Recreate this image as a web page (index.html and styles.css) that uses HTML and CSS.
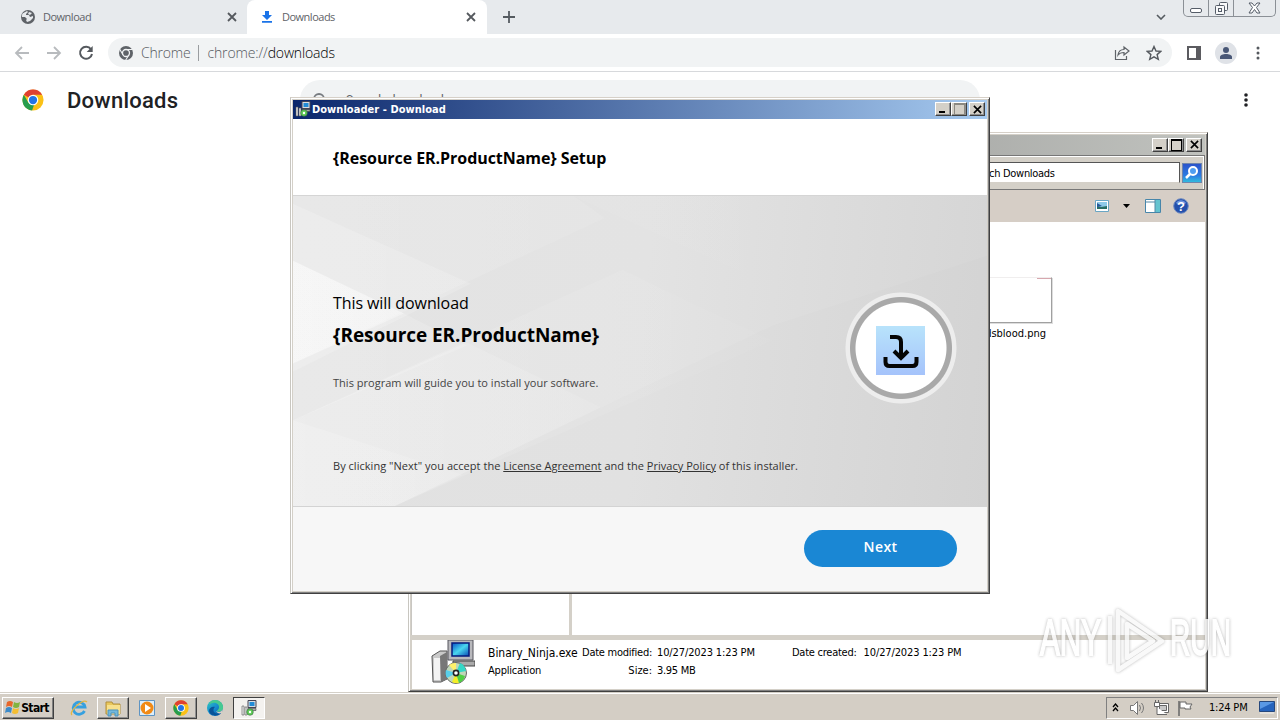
FILE: index.html
```html
<!DOCTYPE html>
<html lang="en">
<head>
  <meta charset="UTF-8">
  <meta name="viewport" content="width=device-width, initial-scale=1">
  <title>Downloads</title>
  <link rel="stylesheet" href="styles.css">
</head>
<body>
  <!-- Shared icons -->
  <svg class="defs" width="0" height="0">
    <defs>
      <linearGradient id="screen" x1="0" y1="0" x2="1" y2="1"><stop offset="0" stop-color="#0752c8"/><stop offset=".5" stop-color="#49d7ef"/><stop offset="1" stop-color="#0848b4"/></linearGradient>
      <linearGradient id="edgeBlue" x1="0" y1="0" x2="1" y2="1"><stop offset="0" stop-color="#30c9c0"/><stop offset=".5" stop-color="#168bd0"/><stop offset="1" stop-color="#0c529c"/></linearGradient>
      <linearGradient id="tile" x1="0" y1="0" x2="0" y2="1"><stop offset="0" stop-color="#b8e3fb"/><stop offset="1" stop-color="#a5c3fb"/></linearGradient>
      <linearGradient id="ray" gradientUnits="userSpaceOnUse" x1="0" y1="0" x2="560" y2="0"><stop offset="0" stop-color="#fff" stop-opacity=".4"/><stop offset="1" stop-color="#fff" stop-opacity="0"/></linearGradient>
    </defs>
    <symbol id="chrome" viewBox="0 0 24 24">
      <circle cx="12" cy="12" r="11.5" fill="#fbc116"/>
      <path d="M12 12 2 6.2A11.5 11.5 0 0 1 22 6.3H12Z" fill="#df4032"/>
      <path d="M2 6.2 7 15l5 2.5 1 .1L11 23.5A11.5 11.5 0 0 1 2 6.2Z" fill="#279d4d"/>
      <circle cx="12" cy="12" r="5.8" fill="#fff"/>
      <circle cx="12" cy="12" r="4.5" fill="#2474e5"/>
    </symbol>
    <symbol id="installer" viewBox="0 0 44 44">
      <path d="M1 16 9 11h7v28l-6 3H2Z" fill="#c9c9c9" stroke="#555"/>
      <path d="M3 18h6v22H3Z" fill="#f3f3f3"/>
      <path d="m9 16 7-4v27l-6 3Z" fill="#777"/>
      <path d="M17 0h25v20H17Z" fill="#b9b9bd" stroke="#55555c"/>
      <path d="M21 3h17v13H21Z" fill="url(#screen)" stroke="#061b7c" stroke-width="1.5"/>
      <path d="M22 21h22v5H22Z" fill="#aaa" stroke="#444"/>
      <circle cx="25" cy="33" r="10.5" fill="#c0d7b9" stroke="#666"/>
      <path d="m25 33-7-8a10 10 0 0 1 7-2Z" fill="#fff16b"/>
      <path d="m25 33 4-10a10 10 0 0 1 6 8Z" fill="#35d8c7"/>
      <path d="m25 33-10-3a10 10 0 0 0 1 8Z" fill="#58cfe9"/>
      <path d="m25 33-4 9a10 10 0 0 0 7 1Z" fill="#f3ee26"/>
      <path d="m25 33 9 3a10 10 0 0 1-6 7Z" fill="#50d044"/>
      <circle cx="25" cy="33" r="2.6" fill="#fff" stroke="#222" stroke-width="1.6"/>
    </symbol>
    <symbol id="installer-small" viewBox="0 0 16 16">
      <path d="M1 6h2v9H1ZM4 7h2v8H4Z" fill="#eee" stroke="#555" stroke-width=".6"/>
      <path d="M7 .5h8v7H7Z" fill="#d9dde2" stroke="#445"/>
      <path d="M8.500 2h5v4h-5Z" fill="#218bd6"/>
      <path d="M7 8.500h8v2H7Z" fill="#aaa" stroke="#444" stroke-width=".6"/>
      <circle cx="9" cy="12" r="3.300" fill="#5ecb54" stroke="#3c6b46" stroke-width=".6"/>
      <circle cx="9" cy="12" r="1.200" fill="#fff"/>
    </symbol>
    <symbol id="close" viewBox="0 0 10 10"><path d="m1 1 8 8m0-8L1 9" stroke="currentColor" stroke-width="1.8"/></symbol>
  </svg>

  <div class="browser">
    <div class="tabs">
      <div class="tab first">
        <svg class="tab-icon" viewBox="0 0 16 16"><circle cx="8" cy="8" r="7" fill="#5f6368"/><path d="M3 4.3 7 2l1 1-2 2v1h3l1 2 3-1v2l-3 3-3 1-1-2 1-1-2-2H2c0-2 0-3 1-3.700Z" fill="#e7eaed"/><path d="m9 3 3 1-2 2-2-1Z" fill="#e7eaed"/></svg>
        <span>Download</span>
        <svg class="tab-close"><use href="#close"/></svg>
      </div>
      <div class="tab active">
        <svg class="tab-icon" viewBox="0 0 16 16"><path d="M6 2h4v4h3l-5 5-5-5h3ZM3 12h10v1.700H3Z" fill="#1a73e8"/></svg>
        <span>Downloads</span>
        <svg class="tab-close"><use href="#close"/></svg>
      </div>
      <svg class="plus" viewBox="0 0 12 12"><path d="M6 0v12M0 6h12" stroke="#555b60" stroke-width="1.8"/></svg>
      <svg class="tab-chevron" viewBox="0 0 10 6"><path d="m1 1 4 4 4-4" fill="none" stroke="#555b60" stroke-width="1.600"/></svg>
      <div class="caption-buttons">
        <span><svg width="12" height="6" viewBox="0 0 12 6"><rect x=".5" y=".5" width="11" height="4" rx="1.500" fill="#fff" stroke="#555d68"/></svg></span>
        <span><svg width="13" height="13" viewBox="0 0 13 13" fill="#f8f9fa" stroke="#555d68"><rect x="4.500" y=".5" width="8" height="8" rx="1"/><rect x=".5" y="3.500" width="9" height="9" rx="1"/><rect x="3.500" y="6.500" width="3" height="3"/></svg></span>
        <span><svg width="13" height="12" viewBox="0 0 13 12"><path d="M1 1h3l2.500 3L9 1h3L8.500 5.500 12 11H9L6.500 7.500 4 11H1l3.500-5.500Z" fill="#fff" stroke="#555d68"/></svg></span>
      </div>
    </div>
    <div class="toolbar">
      <svg class="nav-icon" viewBox="0 0 16 16"><path d="M15 8H2m6-6L2 8l6 6" fill="none" stroke="#b8bbbe" stroke-width="1.800"/></svg>
      <svg class="nav-icon" viewBox="0 0 16 16"><path d="M1 8h13M8 2l6 6-6 6" fill="none" stroke="#b8bbbe" stroke-width="1.800"/></svg>
      <svg class="nav-icon" viewBox="0 0 16 16"><path d="M13 4.300A6 6 0 1 0 14 9" fill="none" stroke="#55595e" stroke-width="2"/><path d="M14.700 1v6h-6Z" fill="#55595e"/></svg>
      <div class="address">
        <svg class="site-icon" viewBox="0 0 16 16"><circle cx="8" cy="8" r="7" fill="#5f6368"/><circle cx="8" cy="8" r="3.500" fill="none" stroke="#f1f3f4" stroke-width="1.300"/><path d="M8 4.500h6.500M5 9.700 1.700 4.300m9.300 5.400-3.400 5.600" stroke="#f1f3f4" stroke-width="1.100"/></svg>
        <span class="site">Chrome</span>
        <span class="divider"></span>
        <span class="url">chrome://<b>downloads</b></span>
        <svg class="share" viewBox="0 0 16 16" fill="none" stroke="#5f6368" stroke-width="1.200"><path d="M1.500 5v9.500h11V11"/><path d="M4 10c.5-4 3-5.500 6-5.500V2l5 4-5 4V7.500C7 7.500 5.500 8 4 10Z"/></svg>
        <svg class="star" viewBox="0 0 16 16"><path d="m8 1.500 2 4.500 4.800.4-3.700 3.200 1.200 4.800L8 11.900l-4.300 2.500 1.200-4.800L1.200 6.400 6 6Z" fill="none" stroke="#55595e" stroke-width="1.400"/></svg>
      </div>
      <svg class="side-icon" viewBox="0 0 14 14"><path d="M1 1h12v12H1Z" fill="none" stroke="#5b5b60" stroke-width="2"/><path d="M9 1h4v12H9Z" fill="#5b5b60"/></svg>
      <svg class="avatar" viewBox="0 0 22 22"><circle cx="11" cy="11" r="11" fill="#dfe2e7"/><circle cx="11" cy="8" r="3" fill="#495776"/><path d="M5 17v-2c0-4 12-4 12 0v2Z" fill="#495776"/></svg>
      <svg class="dots" viewBox="0 0 4 14" fill="#55595e"><circle cx="2" cy="2" r="1.500"/><circle cx="2" cy="7" r="1.500"/><circle cx="2" cy="12" r="1.500"/></svg>
    </div>
    <div class="downloads-head">
      <svg class="logo"><use href="#chrome"/></svg>
      <h1>Downloads</h1>
      <div class="search">
        <svg width="16" height="16" viewBox="0 0 16 16"><circle cx="7" cy="7" r="5" fill="none" stroke="#777b80" stroke-width="1.800"/></svg>
        <span>Search downloads</span>
      </div>
      <svg class="dots page-dots" viewBox="0 0 4 14" fill="#202124"><circle cx="2" cy="2" r="1.800"/><circle cx="2" cy="7" r="1.800"/><circle cx="2" cy="12" r="1.800"/></svg>
    </div>
  </div>

  <div class="window explorer">
    <div class="titlebar">
      <span class="win-btn min"></span><span class="win-btn max"></span><span class="win-btn"><svg><use href="#close"/></svg></span>
    </div>
    <div class="explorer-search">
      <div class="search-box">Search Downloads</div>
      <div class="search-btn"><svg width="18" height="18" viewBox="0 0 18 18"><circle cx="10" cy="7" r="4" fill="#4f9df0" stroke="#fff" stroke-width="2"/><path d="m7 10-4 4" stroke="#fff" stroke-width="2.500"/></svg></div>
    </div>
    <div class="explorer-tools">
      <svg class="view-icon" width="14" height="12" viewBox="0 0 14 12"><path d="M.5.5h13v11H.5Z" fill="#fff" stroke="#6aa6c4"/><path d="M2 2h10v7H2Z" fill="#8ecae9"/><path d="m2 6 4 1 6-1v3H2Z" fill="#286e65"/><path d="m2 3 5 3-5 1Z" fill="#265a9b"/></svg>
      <svg class="caret" width="7" height="4" viewBox="0 0 7 4"><path d="M0 0h7L3.500 4Z"/></svg>
      <svg class="pane-icon" width="16" height="14" viewBox="0 0 16 14"><path d="M.5.5h15v13H.5Z" fill="#fff" stroke="#4786aa"/><path d="M10 1h5v12h-5Z" fill="#64c3cf"/><path d="M1 3h9M10 1v12" stroke="#5588a5"/></svg>
      <svg width="16" height="16" viewBox="0 0 16 16"><circle cx="8" cy="8" r="7.300" fill="#2450ac" stroke="#708bc0"/><path d="M3 5a6 6 0 0 1 10 0c-3 2-7 2-10 0Z" fill="#6f95de"/><text x="8" y="12.500" class="help-mark">?</text></svg>
    </div>
    <div class="explorer-body">
      <div class="nav-pane"></div>
      <div class="files">
        <div class="file">
          <div class="thumb"></div>
          <span>birdsblood.png</span>
        </div>
      </div>
    </div>
    <div class="details">
      <svg class="exe-icon"><use href="#installer"/></svg>
      <div class="detail-name"><span class="exe-name">Binary_Ninja.exe</span><span>Application</span></div>
      <div class="detail-labels"><span class="modified">Date modified:</span><span>Size:</span></div>
      <div class="detail-values"><span class="date">10/27/2023 1:23 PM</span><span class="size">3.95 MB</span></div>
      <div class="detail-created"><span class="created">Date created:</span><span class="date">10/27/2023 1:23 PM</span></div>
    </div>
  </div>

  <div class="window setup">
    <div class="titlebar">
      <svg class="title-icon"><use href="#installer-small"/></svg>
      <span class="title">Downloader - Download</span>
      <span class="win-btn min"></span><span class="win-btn max disabled"></span><span class="win-btn"><svg><use href="#close"/></svg></span>
    </div>
    <div class="setup-head"><h2>{Resource ER.ProductName} Setup</h2></div>
    <div class="hero">
      <svg class="hero-bg" viewBox="0 0 695 311" preserveAspectRatio="none" fill="url(#ray)">
        <path d="M0 8 178 88 0 176Z" opacity=".5"/>
        <path d="M0 65 111 118 0 168Z"/>
        <path d="M0 65 111 118 0 168Z" opacity=".5"/>
        <path d="M0 168 312 22 281 0H0Z" opacity=".4"/>
        <path d="M0 225 330 74 400 108 480 145 102 311H0Z" opacity=".4"/>
        <path d="M111 118 174 150 0 225V168Z" opacity=".5"/>
        <path d="M0 225 174 147 308 212 102 311H0Z" opacity=".5"/>
        <path d="M0 225V311H102L170 280Z" opacity=".4"/>
        <path d="M281 0 490 95 620 30V0Z" opacity=".2"/>
        <path d="M102 311 480 130 695 60V311Z" fill="#777" opacity=".015"/>
      </svg>
      <div class="hero-text">
        <p class="lead">This will download</p>
        <p class="product">{Resource ER.ProductName}</p>
        <p class="guide">This program will guide you to install your software.</p>
        <p class="legal">By clicking "Next" you accept the <u>License Agreement</u> and the <u>Privacy Policy</u> of this installer.</p>
      </div>
      <div class="badge">
        <svg width="49" height="49" viewBox="0 0 49 49"><path d="M0 0h49v49H0Z" fill="url(#tile)"/><path d="M14 11h6q5 0 5 5v16M18 25l7 7 7-7M9.500 31v5q0 4 4 4h23q4 0 4-4v-5" fill="none" stroke="#050505" stroke-width="4"/></svg>
      </div>
    </div>
    <div class="setup-foot"><button>Next</button></div>
  </div>

  <div class="taskbar">
    <div class="start"><svg width="17" height="16" viewBox="0 0 17 16"><path d="M3 2q3-2 6 0L8 7Q5 5 2 7Z" fill="#e8672b"/><path d="M10 2q3 2 6 0l-1 5q-3 2-6 0Z" fill="#82b440"/><path d="M2 8q3-2 6 0l-1 5q-3-2-6 0Z" fill="#3c8bca"/><path d="M9 8q3 2 6 0l-1 5q-3 2-6 0Z" fill="#f4be32"/></svg><b>Start</b></div>
    <div class="task"><svg viewBox="0 0 18 18"><path d="M14.500 12A6 6 0 1 1 15 8H5" fill="none" stroke="#36a0df" stroke-width="2.800"/><path d="M2 16C-2 13 13-1 17 3" fill="none" stroke="#e4b743" stroke-width="1.300"/></svg></div>
    <div class="task raised"><svg viewBox="0 0 18 18"><path d="M2 3h6l1 2h7v10H2Z" fill="#e9c75b" stroke="#b28f3c"/><path d="M3 6h13v9H3Z" fill="#f8e08c"/><path d="M4 17v-6h10v6h-3v-3H7v3Z" fill="#72b8dc" stroke="#4a91bb"/></svg></div>
    <div class="task"><svg viewBox="0 0 18 18"><path d="M1.500 1.500h15v15h-15Z" fill="#dceefb" stroke="#5e94c3"/><circle cx="9" cy="9" r="6.500" fill="#f18a16"/><path d="m7 5 6 4-6 4Z" fill="#fff"/></svg></div>
    <div class="task raised"><svg viewBox="0 0 18 18"><use href="#chrome" x="1" y="1" width="16" height="16"/></svg></div>
    <div class="task"><svg viewBox="0 0 18 18"><circle cx="9" cy="9" r="8" fill="url(#edgeBlue)"/><path d="M3 6c4-4 10-2 10 2 0 3-2 3-2 4 2 2 5 0 6-2 1-6-4-9-8-9C5 1 3 4 3 6Z" fill="#46c991"/><path d="M8 9c-2 4 2 7 7 5-2 3-11 4-12-2C3 9 6 7 9 8Z" fill="#095499"/><path d="M10 12c3 2 5 1 7-2l-1 4c-3 1-5 0-6-2Z" fill="#d6cfc7"/></svg></div>
    <div class="task pressed"><svg viewBox="0 0 18 18"><use href="#installer-small" x="1" y="1" width="16" height="16"/></svg></div>
    <div class="tray">
      <svg width="7" height="9" viewBox="0 0 7 9"><path d="m1 4 2.500-3L6 4M1 8l2.500-3L6 8" fill="none" stroke="#000" stroke-width="1.300"/></svg>
      <svg class="sound" width="17" height="16" viewBox="0 0 17 16" stroke="#777" fill="#fff"><path d="M1.500 5.500h3l4-4v13l-4-4h-3Z"/><path d="M10.500 5q2 3 0 6m2-8q4 5 0 10" fill="none"/></svg>
      <svg width="17" height="16" viewBox="0 0 17 16" stroke="#666" fill="#fff"><path d="M4.500 3.500h11v9h-11Z"/><path d="M6.500 5.500h7v5h-7Z" fill="#c8c8c8"/><path d="M1.500 2.500h5v4h-5ZM4 7v7.500h10M2.500 0v2m3-2v2"/></svg>
      <svg width="17" height="16" viewBox="0 0 17 16"><path d="M2 1v15" stroke="#666" stroke-width="1.500"/><path d="M3 2h6v2h6l-2 3 1 2H8V8H3Z" fill="#fff" stroke="#666"/></svg>
      <span class="clock">1:24 PM</span>
      <svg class="desktop" width="16" height="13" viewBox="0 0 16 13"><path d="M.5.500h15v10H.5Z" fill="#2664bd" stroke="#26487d"/><path d="M1 1h14L1 8Z" fill="#5a98e4"/><path d="M1 12h14" stroke="#f2f2f2"/></svg>
    </div>
  </div>

  <svg class="watermark" viewBox="0 0 200 70">
    <text x="4" y="49" textLength="61" lengthAdjust="spacingAndGlyphs">ANY</text>
    <path d="M74 10v48M82 5v59l44-29ZM91 18v34l26-17Z"/>
    <text x="134" y="49" textLength="61" lengthAdjust="spacingAndGlyphs">RUN</text>
  </svg>
</body>
</html>
```
FILE: styles.css
```css
* {
  box-sizing: border-box;
}

body {
  margin: 0;
  width: 1280px;
  height: 720px;
  overflow: hidden;
  position: relative;
  background: #fff;
  font-family: "DejaVu Sans Condensed", "DejaVu Sans", sans-serif;
  font-size: 11px;
  color: #000;
}

svg {
  display: block;
  flex: none;
}

h1, h2, p {
  margin: 0;
}

.defs {
  position: absolute;
}

/* Browser */
.tabs {
  display: flex;
  align-items: center;
  height: 34px;
  background: #e7eaed;
}

.tab {
  display: flex;
  align-items: center;
  height: 34px;
  width: 239px;
  padding: 0 11px 0 12px;
  color: #5f6368;
  font: 11px "Open Sans", sans-serif;
}

.tab.first {
  width: 247px;
  padding: 0 10px 0 20px;
}

.tab.active {
  width: 240px;
  background: #fff;
  border-radius: 8px 8px 0 0;
}

.tab-icon {
  width: 16px;
  height: 16px;
  margin-right: 7px;
}

.tab span {
  flex: 1;
  margin-bottom: 2px;
  letter-spacing: -0.5px;
}

.tab-close {
  width: 10px;
  height: 10px;
  color: #55595e;
}

.plus {
  width: 12px;
  height: 12px;
  margin-left: 16px;
}

.tab-chevron {
  width: 10px;
  height: 6px;
  margin-left: auto;
  margin-right: 17px;
}

.caption-buttons {
  display: flex;
  align-self: flex-start;
  height: 17px;
  width: 93px;
  margin-right: 4px;
  border: 1px solid #8b9096;
  border-top: 0;
  border-radius: 0 0 5px 5px;
}

.caption-buttons span {
  width: 25px;
  display: flex;
  align-items: center;
  justify-content: center;
  border-right: 1px solid #8b9096;
}

.caption-buttons span:first-child {
  padding-top: 6px;
}

.caption-buttons span:last-child {
  flex: 1;
  border: 0;
}

.toolbar {
  display: flex;
  align-items: center;
  height: 38px;
  padding: 0 20px 0 14px;
  border-bottom: 1px solid #d7d9dc;
}

.nav-icon {
  width: 16px;
  height: 16px;
  margin-right: 16px;
}

.address {
  display: flex;
  align-items: center;
  width: 1064px;
  height: 29px;
  margin-left: -2px;
  padding: 0 10px;
  border-radius: 15px;
  background: #f1f3f4;
  font: 300 14px "Open Sans", sans-serif;
  color: #55595e;
}

.site-icon {
  width: 16px;
  height: 16px;
  margin-right: 7px;
}

.site {
  letter-spacing: -0.2px;
}

.divider {
  width: 1px;
  height: 16px;
  margin: 0 8px;
  background: #9a9da0;
}

.url {
  letter-spacing: -0.15px;
}

.url b {
  font-weight: 300;
  color: #000;
}

.share {
  width: 16px;
  height: 16px;
  margin-left: auto;
}

.star {
  width: 16px;
  height: 16px;
  margin-left: 16px;
}

.side-icon {
  width: 14px;
  height: 14px;
  margin-left: 15px;
}

.avatar {
  width: 22px;
  height: 22px;
  margin-left: 14px;
}

.dots {
  width: 4px;
  height: 14px;
  margin-left: auto;
}

.downloads-head {
  display: flex;
  align-items: center;
  height: 56px;
  padding: 0 32px 0 22px;
}

.logo {
  width: 22px;
  height: 22px;
}

.downloads-head h1 {
  width: 212px;
  margin-left: 23px;
  font: 500 22px Roboto, sans-serif;
  letter-spacing: 0.25px;
  color: #202124;
}

.search {
  display: flex;
  align-items: center;
  width: 680px;
  height: 40px;
  margin-left: 21px;
  padding-left: 12px;
  border-radius: 20px;
  background: #f1f3f4;
  font: 12px Roboto, sans-serif;
  color: #5f6368;
}

.search span {
  margin-left: 18px;
  letter-spacing: 0.4px;
}

/* Desktop windows */
.window {
  position: absolute;
  display: flex;
  flex-direction: column;
  border: 1px solid;
  border-color: #d6d0c8 #404040 #404040 #c8c6c0;
  box-shadow: inset 1px 1px #fff, inset -1px -1px #808080;
  background: #d4d0c8;
  padding: 2px;
}

.titlebar {
  display: flex;
  align-items: center;
  flex: none;
  height: 19px;
}

.win-btn {
  display: flex;
  align-items: center;
  justify-content: center;
  width: 16px;
  height: 14px;
  background: #d4d0c8;
  border: 1px solid;
  border-color: #fff #404040 #404040 #fff;
  box-shadow: inset -1px -1px #909090;
}

.win-btn:last-child {
  margin-left: 2px;
}

.win-btn svg {
  width: 9px;
  height: 9px;
}

.min::after {
  content: "";
  width: 6px;
  height: 2px;
  margin: 6px 2px 0 0;
  background: #000;
}

.max::after {
  content: "";
  width: 9px;
  height: 9px;
  border: 1px solid #000;
  border-top-width: 2px;
}

.max.disabled::after {
  border-color: #8b8982;
}

.explorer {
  left: 408px;
  top: 132px;
  width: 800px;
  height: 560px;
}

.explorer .titlebar {
  height: 20px;
  justify-content: flex-end;
  padding: 0 3px 1px 0;
  background: linear-gradient(90deg, #808080, #c0c2be);
}

.explorer-search {
  display: flex;
  justify-content: flex-end;
  align-items: center;
  flex: none;
  height: 35px;
  padding-right: 2px;
  border: 1px solid #777;
  border-left: 0;
  box-shadow: inset -1px 1px #fff, 0 1px #fff;
}

.search-box {
  width: 215px;
  height: 21px;
  padding-left: 2px;
  line-height: 21px;
  font-size: 11px;
  letter-spacing: -0.3px;
  background: #fff;
  border: 1px solid #555;
  border-bottom-color: #d4d0c8;
}

.search-btn {
  width: 20px;
  height: 20px;
  margin-left: 2px;
  border: 1px solid #6f85ac;
  background: linear-gradient(#2b54cb, #2b7de2 65%, #31bbdf);
}

.explorer-tools {
  display: flex;
  align-items: center;
  justify-content: flex-end;
  flex: none;
  height: 32px;
  padding-right: 16px;
  background: #d6cec6;
}

.caret {
  margin: 0 15px 0 14px;
}

.pane-icon {
  margin-right: 12px;
}

.help-mark {
  font: bold 13px "Liberation Sans", sans-serif;
  text-anchor: middle;
  fill: #fff;
}

.explorer-body {
  display: flex;
  flex: 1;
  border-left: 1px solid #c9c7c2;
}

.nav-pane {
  width: 160px;
  background: #fff;
  border-right: 3px solid #d4d0c8;
}

.files {
  flex: 1;
  background: #fff;
  padding: 55px 0 0 370px;
}

.file {
  width: 112px;
  text-align: center;
}

.file span {
  display: block;
  width: 104px;
  margin-top: 4px;
  text-align: right;
  white-space: nowrap;
}

.thumb {
  width: 110px;
  height: 46px;
  border: 1px solid #f0eeee;
  border-right: 1px solid #a0a0a0;
  border-bottom: 1px solid #a0a0a0;
  box-shadow: 1px 1px #ddd;
  background: linear-gradient(#d7a7ae, #d7a7ae) right top / 14px 1px no-repeat;
}

.details {
  display: flex;
  flex: none;
  height: 54px;
  margin-left: 1px;
  padding: 4px 0 0 19px;
  border-top: 5px solid #d4d0c8;
  background: #fff;
  line-height: 18px;
}

.details span {
  display: block;
  white-space: nowrap;
}

.exe-icon {
  width: 44px;
  height: 44px;
  margin-top: -4px;
}

.detail-name {
  width: 94px;
  margin-left: 13px;
  letter-spacing: -0.2px;
}

.details .exe-name {
  font-size: 12px;
  height: 18px;
  letter-spacing: -0.03px;
}

.detail-labels {
  width: 70px;
  text-align: right;
}

.detail-values {
  margin-left: 5px;
  width: 135px;
}

.modified, .created {
  letter-spacing: -0.25px;
}

.date {
  letter-spacing: -0.12px;
}

.size {
  letter-spacing: -0.3px;
}

.detail-created {
  display: flex;
  gap: 7px;
}

/* Setup dialog */
.setup {
  left: 290px;
  top: 97px;
  width: 700px;
  height: 497px;
}

.setup .titlebar {
  padding: 0 2px 1px 2px;
  background: linear-gradient(90deg, #0b276c, #a6caf0);
}

.title-icon {
  width: 16px;
  height: 16px;
}

.title {
  flex: 1;
  margin: 1px 0 0 1px;
  color: #fff;
  font-weight: bold;
  letter-spacing: 0.05px;
}

.setup-head {
  flex: none;
  height: 76px;
  padding: 1px 0 0 40px;
  display: flex;
  align-items: center;
  background: #fff;
}

.setup-head h2 {
  font: bold 16px "Open Sans", sans-serif;
  letter-spacing: -0.06px;
}

.hero {
  display: flex;
  position: relative;
  flex: none;
  height: 312px;
  border-top: 1px solid #d5d5d5;
  border-bottom: 1px solid #d3d3d3;
  background: linear-gradient(95deg, #e4e4e4, #e3e3e3 50%, #d5d5d5);
}

.hero-bg {
  position: absolute;
  inset: 0;
  width: 100%;
  height: 100%;
}

.hero-text {
  position: relative;
  width: 552px;
  padding: 96px 0 0 40px;
  font-family: "Open Sans", sans-serif;
}

.lead {
  font-size: 16px;
  line-height: 22px;
  letter-spacing: -0.08px;
}

.product {
  margin-top: 6px;
  font-size: 19px;
  line-height: 30px;
  font-weight: bold;
  letter-spacing: -0.05px;
}

.guide {
  margin-top: 24px;
  font-size: 11px;
  line-height: 18px;
  color: #444;
  letter-spacing: 0.02px;
}

.legal {
  margin-top: 65px;
  font-size: 11px;
  line-height: 18px;
  color: #333;
  white-space: nowrap;
  letter-spacing: 0.03px;
}

.badge {
  position: relative;
  display: flex;
  align-items: center;
  justify-content: center;
  width: 112px;
  height: 112px;
  margin-top: 96px;
  padding: 5px 1px 0 0;
  border-radius: 50%;
  background: radial-gradient(circle, #fff 0 45px, #a9a9a9 46px 50.5px, #ededed 51.500px 55px, transparent 56px);
}

.setup-foot {
  display: flex;
  justify-content: flex-end;
  flex: 1;
  padding: 23px 30px 0 0;
  background: #f7f7f7;
}

.setup-foot button {
  width: 153px;
  height: 37px;
  padding: 0 0 4px;
  border: 0;
  border-radius: 19px;
  background: #1a87d4;
  color: #fff;
  font: 600 14px "Open Sans", sans-serif;
  letter-spacing: 0.4px;
}

/* Taskbar */
.taskbar {
  position: absolute;
  left: 0;
  right: 0;
  bottom: 0;
  display: flex;
  align-items: center;
  height: 28px;
  padding: 2px 2px 0;
  border-top: 1px solid #d4d0c8;
  box-shadow: inset 0 1px #fff;
  background: #d4cec5;
}

.start, .task {
  display: flex;
  align-items: center;
  justify-content: center;
  height: 22px;
}

.start {
  width: 52px;
  margin-right: 9px;
  padding-right: 3px;
  border: 1px solid;
  border-color: #fff #404040 #404040 #fff;
  box-shadow: inset -1px -1px #808080;
}

.start b {
  font-size: 12px;
  letter-spacing: -0.6px;
}

.task {
  width: 32px;
  margin-right: 2px;
}

.task svg {
  width: 18px;
  height: 18px;
}

.raised {
  border: 1px solid;
  border-color: #fff #404040 #404040 #fff;
  box-shadow: inset -1px -1px #909090;
}

.pressed {
  border: 1px solid;
  border-color: #404040 #fff #fff #404040;
  background: #f4f2ef;
}

.tray {
  display: flex;
  align-items: center;
  gap: 7px;
  width: 172px;
  height: 22px;
  margin-left: auto;
  padding-left: 5px;
  border: 1px solid;
  border-color: #808080 #fff #fff #808080;
}

.sound {
  margin-left: 3px;
}

.clock {
  width: 43px;
  margin-left: 8px;
  letter-spacing: -0.2px;
  white-space: nowrap;
}

.watermark {
  position: absolute;
  left: 1036px;
  top: 606px;
  width: 200px;
  height: 70px;
  overflow: visible;
  filter: drop-shadow(0 0 1.5px rgba(80, 80, 80, 0.5));
  opacity: 0.8;
}

.watermark text {
  font: 50px "Liberation Sans Narrow", "Liberation Sans", sans-serif;
  fill: #fff;
  stroke: #fff;
  stroke-width: 2px;
}

.watermark path {
  fill: none;
  stroke: #f8f8f8;
  stroke-width: 4.5px;
  stroke-linejoin: round;
}
```
